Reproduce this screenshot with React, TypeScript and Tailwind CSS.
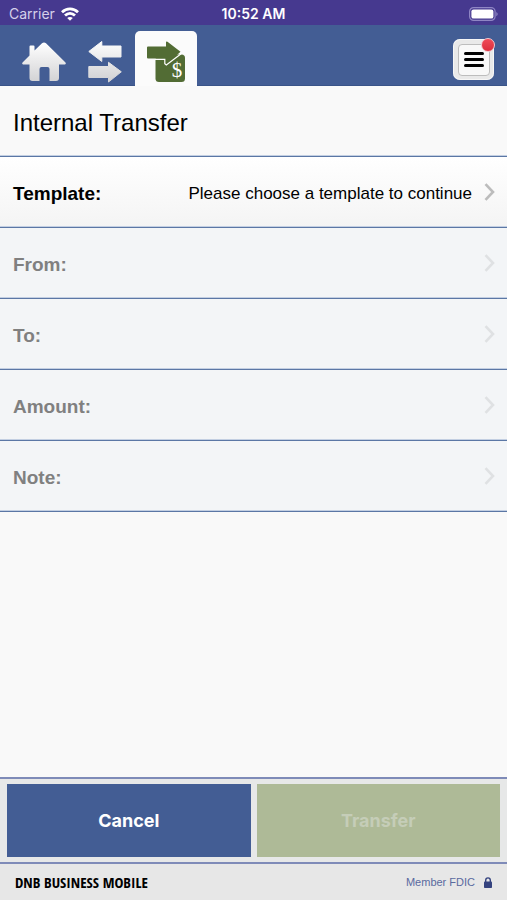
import React from 'react';
import { clsx } from 'clsx';

interface FieldRowProps {
  label: string;
  value?: string;
  disabled?: boolean;
}

const StatusBar = () => (
  <div className="grid h-[25px] shrink-0 grid-cols-3 items-center bg-[#46398f] px-[9px] pt-[3px] font-['Inter',sans-serif] text-[14px] leading-[20px] text-white">
    <div className="flex items-center gap-[6px] text-[#d5d0ea]">
      <span>Carrier</span>
      <svg width="18" height="14" viewBox="0 0 18 14" fill="none" stroke="#fff" strokeWidth="2.8" aria-hidden="true">
        <path d="M1 5.2C5.6.8 12.4.8 17 5.2" />
        <path d="M4 8.600c3-2.900 7-2.900 10 0" />
        <path d="M9 13.800 6.200 11c1.600-1.500 4-1.500 5.600 0z" fill="#fff" stroke="none" />
      </svg>
    </div>
    <span className="text-center font-semibold">10:52 AM</span>
    <svg className="justify-self-end" width="29" height="14" viewBox="0 0 29 14" aria-hidden="true">
      <rect x=".6" y=".6" width="25.500" height="12.800" rx="4" fill="none" stroke="#8f86c4" strokeWidth="1.200" />
      <rect x="2.400" y="2.400" width="22" height="9.200" rx="2.200" fill="#fff" />
      <path d="M27.300 5v4.200c1.800-.8 1.800-3.400 0-4.200z" fill="#8f86c4" />
    </svg>
  </div>
);

const HomeIcon = () => (
  <svg width="46" height="40" viewBox="0 0 46 40" aria-hidden="true">
    <defs>
      <linearGradient id="silver" x1="0" y1="0" x2="0" y2="1">
        <stop offset="0" stopColor="#fff" />
        <stop offset="1" stopColor="#d3d3d5" />
      </linearGradient>
    </defs>
    <path
      d="M21 1.200Q23 0 25 1.200L44.500 20.500Q45.500 22 44 22.500H38V36Q38 39 35 39H28.500V27Q28.500 25 26.500 25H20.500Q18.500 25 18.500 27V39H11.500Q8.500 39 8.500 36V22.500H2Q.5 22 1.500 20.500L8.500 13.500V4.500Q8.500 3.500 9.500 3.500H12.500Q13.500 3.500 13.500 4.500V8.500Z"
      fill="url(#silver)"
    />
  </svg>
);

const SwapIcon = () => (
  <svg width="34" height="43" viewBox="0 0 34 43" aria-hidden="true">
    <defs>
      <linearGradient id="swapFill" x1="0" y1="0" x2="0" y2="43" gradientUnits="userSpaceOnUse">
        <stop offset="0" stopColor="#fff" />
        <stop offset="1" stopColor="#cfcfd2" />
      </linearGradient>
    </defs>
    <g fill="url(#swapFill)" stroke="url(#swapFill)" strokeWidth="1" strokeLinejoin="round">
      <path d="M.8 11.500 13.800 1.500V6H33V17H13.800V21.500Z" />
      <path d="M33.300 31.800 20.500 22.300V26.500H.8V37.500H20.500V42Z" />
    </g>
  </svg>
);

const TransferIcon = () => (
  <svg width="39" height="42" viewBox="0 0 39 42" aria-hidden="true">
    <rect x="8.500" y="13.500" width="29.500" height="27.500" rx="3.500" fill="#526c34" />
    <path
      d="M1 5.500H19V1.200Q19 0 20.500.8L33.500 10.800 20.500 22.500Q19.500 23.300 19.300 22V17.500H1Q0 17.500 0 16.500V6.500Q0 5.500 1 5.500Z"
      fill="#526c34"
    />
    <path d="M8 18.300H17.800V22.800L19.300 24 34.500 12.500" fill="none" stroke="#fff" strokeWidth="1.200" />
    <text x="30" y="36" textAnchor="middle" fontFamily="Liberation Serif, serif" fontSize="21" fill="#fff">
      $
    </text>
  </svg>
);

const Chevron = () => (
  <svg width="11" height="18" viewBox="0 0 11 18" fill="none" stroke="currentColor" strokeWidth="2.600" aria-hidden="true">
    <path d="M1.500 1.200 9 9l-7.500 7.800" />
  </svg>
);

const NavBar = () => (
  <nav className="flex h-[61px] shrink-0 items-end border-b border-[#3a5488] bg-[#435d94] pr-[13px] pl-[21px]">
    <button type="button" aria-label="Home" className="pb-[3px]">
      <HomeIcon />
    </button>
    <button type="button" aria-label="Transfers" className="ml-[21px] pb-[2px]">
      <SwapIcon />
    </button>
    <button
      type="button"
      aria-label="Internal transfer"
      className="-mb-px ml-[13px] flex h-[55px] w-[62px] items-end justify-center rounded-t-[5px] bg-[#fbfbfb] pb-[3px]"
    >
      <TransferIcon />
    </button>
    <button
      type="button"
      aria-label="Menu"
      className="relative mb-[5px] ml-auto flex size-[41px] items-center justify-center rounded-[7px] bg-[#e9e9e9] ring-1 ring-white/60 ring-inset"
    >
      <span className="flex size-[32px] flex-col items-center justify-center gap-[3px] rounded-[4px] border border-[#bdbdbd] bg-[#f8f8f8]">
        <span className="h-[3px] w-[20px] rounded-full bg-black" />
        <span className="h-[3px] w-[20px] rounded-full bg-black" />
        <span className="h-[3px] w-[20px] rounded-full bg-black" />
      </span>
      <span className="absolute -top-[1px] -right-[1px] size-[14px] rounded-full border border-[#f3c6cb] bg-gradient-to-b from-[#f04a58] to-[#dc2c3b]" />
    </button>
  </nav>
);

const FieldRow = ({ label, value, disabled }: FieldRowProps) => (
  <button
    type="button"
    disabled={disabled}
    className={clsx(
      'flex h-[71px] w-full shrink-0 items-center border-b border-[#5b77a5] pr-[12px] pl-[13px] text-left shadow-[inset_0_-1px_0_#c3cfe2]',
      disabled ? 'bg-[#f3f5f7] text-[#808080]' : 'bg-gradient-to-b from-white to-[#f4f4f4] text-black'
    )}
  >
    <span className="pt-[3px] text-[19px] leading-[24px] font-bold">{label}</span>
    <span className="flex-1 pt-[3px] pr-[12px] text-right text-[17px] leading-[24px]">{value}</span>
    <span className={disabled ? 'text-[#dfe1e3]' : 'text-[#bcbcbc]'}>
      <Chevron />
    </span>
  </button>
);

export default function App() {
  return (
    <div className="flex min-h-screen flex-col bg-[#f9f9f9] font-['Liberation_Sans',Arial,sans-serif] text-black">
      <StatusBar />
      <NavBar />

      <main className="flex flex-1 flex-col">
        <h1 className="flex h-[71px] shrink-0 items-center border-b border-[#5b77a5] px-[13px] pt-[4px] text-[24px] leading-[32px] shadow-[inset_0_-1px_0_#c3cfe2]">
          Internal Transfer
        </h1>
        <FieldRow label="Template:" value="Please choose a template to continue" />
        <FieldRow label="From:" disabled />
        <FieldRow label="To:" disabled />
        <FieldRow label="Amount:" disabled />
        <FieldRow label="Note:" disabled />
      </main>

      <div className="grid shrink-0 grid-cols-2 gap-[6px] border-y-2 border-[#7f8bb8] bg-[#e7e8e8] px-[7px] py-[5px] font-['Inter',sans-serif] text-[18px] leading-[24px] font-bold">
        <button type="button" className="h-[73px] bg-[#435d94] text-white">
          Cancel
        </button>
        <button type="button" disabled className="h-[73px] bg-[#aeba97] text-[#c5cdb8]">
          Transfer
        </button>
      </div>

      <footer className="flex h-[36px] shrink-0 items-center justify-between bg-[#e7e7e7] pr-[15px] pl-[15px]">
        <span className="font-['Liberation_Sans_Narrow','Open_Sans_Condensed','Roboto_Condensed','Liberation_Sans',sans-serif] text-[15px] leading-[20px] font-bold">
          DNB BUSINESS MOBILE
        </span>
        <span className="flex items-center gap-[9px] text-[11px] leading-[16px] text-[#5a6a9f]">
          Member FDIC
          <svg width="8" height="11" viewBox="0 0 8 11" aria-hidden="true">
            <rect y="4.500" width="8" height="6.500" rx=".8" fill="#35437f" />
            <path d="M1.700 5V3.200a2.300 2.300 0 0 1 4.600 0V5" fill="none" stroke="#35437f" strokeWidth="1.400" />
          </svg>
        </span>
      </footer>
    </div>
  );
}
